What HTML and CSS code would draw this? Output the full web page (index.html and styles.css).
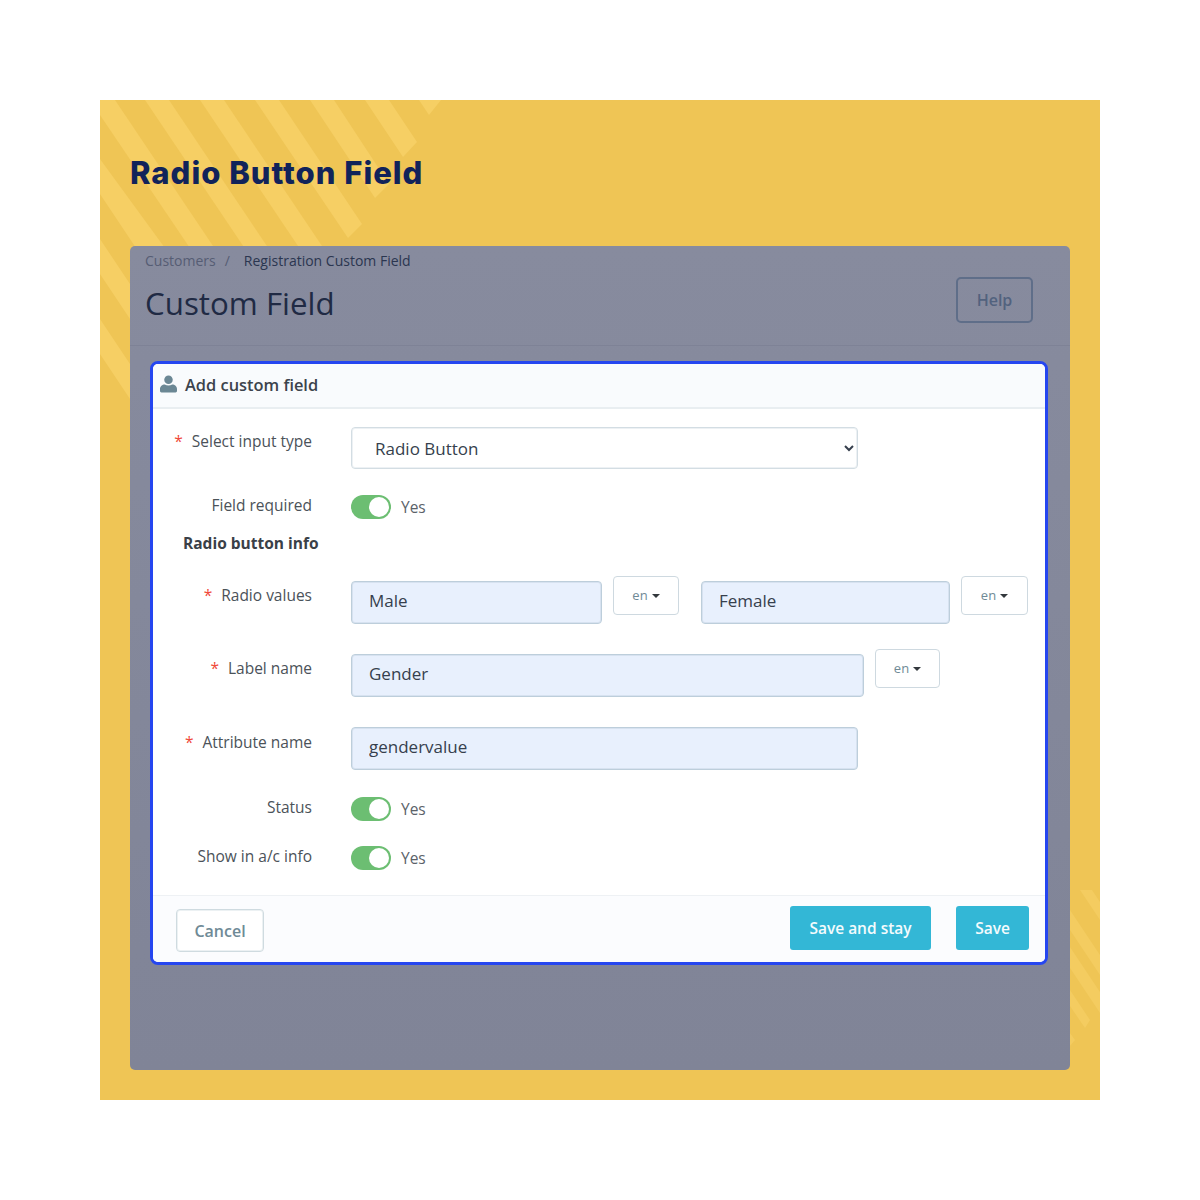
FILE: index.html
```html
<!DOCTYPE html>
<html lang="en">
<head>
<meta charset="utf-8">
<title>Radio Button Field</title>
<link rel="stylesheet" href="styles.css">
</head>
<body>
<main class="poster">
  <svg class="stripes" viewBox="0 0 1000 1000" aria-hidden="true">
    <polygon points="0,254 0,219 30,264 30,299"/>
    <polygon points="0,174 0,139 30,184 30,219"/>
    <polygon points="0,15 0,0 15,0 240,335 240,370"/>
    <polygon points="45,0 69,0 240,255 240,290"/>
    <polygon points="0,59 0,94 100,244 135,244"/>
    <polygon points="100,0 124,0 222,146 198,146"/>
    <polygon points="155,0 179,0 262,124 248,138"/>
    <polygon points="210,0 234,0 289,84 275,98"/>
    <polygon points="265,0 289,0 317,42 303,57"/>
    <polygon points="319,0 341,0 329,15"/>
    <g class="faint">
      <polygon points="980,790 992,790 1000,802 1000,820"/>
      <polygon points="970,810 1000,855 1000,875 970,830"/>
      <polygon points="970,847 1000,892 1000,913 970,868"/>
      <polygon points="970,890 990,920 985,928 970,906"/>
      <polygon points="970,933 975,940 970,946"/>
    </g>
  </svg>
  <h1 class="title">Radio Button Field</h1>
  <section class="panel">
    <header class="panel-head">
      <div class="head-text">
        <nav class="crumbs"><span class="crumb-muted">Customers</span><span class="crumb-sep">/</span><span>Registration Custom Field</span></nav>
        <h2 class="page-title">Custom Field</h2>
      </div>
      <button class="help" type="button">Help</button>
    </header>
    <form class="card">
      <div class="card-head">
        <svg class="user" viewBox="0 0 18 18" aria-hidden="true"><circle cx="9" cy="4.6" r="4.5"/><path d="M0 16.500v-2C0 11.500 2.400 9.600 5 9.600c1.200.6 2.600 1 4 1s2.800-.4 4-1c2.600 0 5 1.900 5 4.900v2c0 .9-.7 1.500-1.500 1.500h-15C.7 18 0 17.400 0 16.500z"/></svg>
        <span>Add custom field</span>
      </div>
      <div class="card-body">
        <div class="row">
          <label class="label req">Select input type</label>
          <select class="select"><option>Radio Button</option></select>
        </div>
        <div class="row row-toggle mt25">
          <label class="label label-flat">Field required</label>
          <span class="toggle"><i></i></span><span class="yes">Yes</span>
        </div>
        <h3 class="section">Radio button info</h3>
        <div class="row mt22">
          <label class="label req label-lang">Radio values</label>
          <input class="input w251" value="Male">
          <button class="lang w66" type="button">en<b></b></button>
          <input class="input w249 ml22" value="Female">
          <button class="lang w67" type="button">en<b></b></button>
        </div>
        <div class="row mt25">
          <label class="label req label-lang">Label name</label>
          <input class="input w513" value="Gender">
          <button class="lang w65" type="button">en<b></b></button>
        </div>
        <div class="row mt30">
          <label class="label req">Attribute name</label>
          <input class="input w507 flat" value="gendervalue">
        </div>
        <div class="row row-toggle mt26">
          <label class="label label-flat">Status</label>
          <span class="toggle"><i></i></span><span class="yes">Yes</span>
        </div>
        <div class="row row-toggle mt24">
          <label class="label label-flat">Show in a/c info</label>
          <span class="toggle"><i></i></span><span class="yes">Yes</span>
        </div>
      </div>
      <div class="card-foot">
        <button class="cancel" type="button">Cancel</button>
        <div class="actions">
          <button class="save stay" type="button">Save and stay</button>
          <button class="save only" type="button">Save</button>
        </div>
      </div>
    </form>
  </section>
</main>
</body>
</html>
```
FILE: styles.css
```css
* { box-sizing: border-box; }
html, body { margin: 0; background: #fff; }
body { font-family: "Open Sans", "Noto Sans", sans-serif; color: #4b5259; }

.poster {
  position: relative;
  width: 1000px;
  height: 1000px;
  margin: 100px;
  padding: 0 30px 30px;
  display: flex;
  flex-direction: column;
  background: #efc555;
  overflow: hidden;
}
.stripes { position: absolute; inset: 0; width: 1000px; height: 1000px; }
.stripes polygon { fill: #f6cf64; }
.stripes .faint { opacity: .75; }

.title {
  position: relative;
  margin: 0;
  height: 146px;
  line-height: 145px;
  font-family: "Inter", "Liberation Sans", sans-serif;
  font-size: 31px;
  font-weight: 800;
  letter-spacing: 1px;
  color: #11235a;
}

.panel {
  position: relative;
  flex: 1;
  background: linear-gradient(#878b9e, #808497);
  border-radius: 5px;
}
.panel-head {
  height: 100px;
  padding: 0 37px 0 15px;
  display: flex;
  justify-content: space-between;
  border-bottom: 1px solid #7e8296;
}
.crumbs {
  padding-top: 5px;
  height: 30px;
  font-size: 14px;
  line-height: 20px;
  color: #2b3650;
}
.crumb-muted { color: #565d74; }
.crumb-sep { margin: 0 14px 0 9px; color: #565d74; }
.page-title {
  margin: 0;
  font-size: 31.300px;
  font-weight: 400;
  line-height: 54px;
  color: #202a44;
}
.help {
  margin-top: 31px;
  width: 77px;
  height: 46px;
  padding: 0;
  border: 2px solid #5f6e89;
  border-radius: 5px;
  background: transparent;
  font: 600 16px "Open Sans", sans-serif;
  color: #52627e;
}

.card {
  margin: 15px 22px 0 20px;
  border: 3px solid #2546f0;
  border-radius: 8px;
  background: #fff;
  overflow: hidden;
}
.card-head {
  height: 45px;
  padding: 0 0 3px 7px;
  display: flex;
  align-items: center;
  gap: 8px;
  background: #f9fbfd;
  border-bottom: 2px solid #e9eef1;
  font-size: 16.400px;
  font-weight: 600;
  color: #3c434c;
}
.user { width: 17px; height: 18px; fill: #6b8794; }
.card-body { padding: 17px 0 25px; }

.row { display: flex; align-items: flex-start; }
.row-toggle { align-items: center; height: 25px; }
.mt22 { margin-top: 22px; }
.mt24 { margin-top: 24px; }
.mt25 { margin-top: 25px; }
.mt26 { margin-top: 26px; }
.mt30 { margin-top: 30px; }

.label {
  width: 159px;
  margin-right: 39px;
  padding-top: 4px;
  text-align: right;
  font-size: 15.500px;
  line-height: 22px;
  color: #4b5259;
}
.label-flat { padding: 0 0 3px; }
.label-lang { padding-top: 8px; }
.req::before { content: "*"; margin-right: 9px; color: #f0493a; }

.select {
  width: 507px;
  height: 42px;
  margin-top: 1px;
  padding-left: 19px;
  border: 1px solid #d3dde3;
  border-radius: 4px;
  background: #fff;
  box-shadow: inset 0 0 0 1px rgba(211, 221, 227, .4);
  font: 400 17px "Open Sans", sans-serif;
  color: #363f4d;
}
.input {
  height: 43px;
  margin-top: 5px;
  padding: 0 17px 4px;
  border: 1px solid #bdcedb;
  border-radius: 4px;
  background: #e8f0fd;
  box-shadow: inset 0 0 0 1px rgba(189, 206, 219, .4);
  font: 400 17px "Open Sans", sans-serif;
  color: #363f4d;
}
.input.flat { margin-top: 0; }
.w251 { width: 251px; }
.w249 { width: 249px; }
.w513 { width: 513px; }
.w507 { width: 507px; }
.ml22 { margin-left: 22px; }

.lang {
  height: 39px;
  margin-left: 11px;
  padding: 0 0 2px;
  border: 1px solid #ced9e0;
  border-radius: 4px;
  background: #fff;
  font: 400 13px "Open Sans", sans-serif;
  color: #6f8a96;
}
.lang b {
  display: inline-block;
  margin-left: 4px;
  vertical-align: middle;
  border: 4px solid transparent;
  border-top-color: #33383d;
  border-bottom-width: 0;
}
.w65 { width: 65px; }
.w66 { width: 66px; }
.w67 { width: 67px; }

.toggle {
  position: relative;
  width: 40px;
  height: 24px;
  border-radius: 12px;
  background: #6cbe72;
}
.toggle i {
  position: absolute;
  top: 2px;
  right: 2px;
  width: 20px;
  height: 20px;
  border-radius: 50%;
  background: #fff;
}
.yes { margin-left: 10px; font-size: 15.500px; color: #5b6269; }

.section {
  margin: 14px 0 0;
  padding-left: 30px;
  font-size: 15.500px;
  font-weight: 700;
  line-height: 21px;
  color: #3a4047;
}

.card-foot {
  height: 67px;
  padding: 10px 16px 0 23px;
  display: flex;
  justify-content: space-between;
  align-items: flex-start;
  background: #fbfcfe;
  border-top: 1px solid #eef1f4;
}
.cancel {
  margin-top: 3px;
  width: 88px;
  height: 43px;
  padding: 0;
  border: 1px solid #cfdbe0;
  border-radius: 4px;
  background: #fff;
  box-shadow: inset 0 0 0 1px rgba(207, 219, 224, .4);
  font: 600 16px "Open Sans", sans-serif;
  color: #6f8a96;
}
.actions { display: flex; gap: 25px; }
.save {
  height: 44px;
  padding: 0;
  border: 0;
  border-radius: 3px;
  background: #33b7d6;
  font: 600 15.500px "Open Sans", sans-serif;
  color: #f4fbfd;
}
.stay { width: 141px; }
.only { width: 73px; }
```
